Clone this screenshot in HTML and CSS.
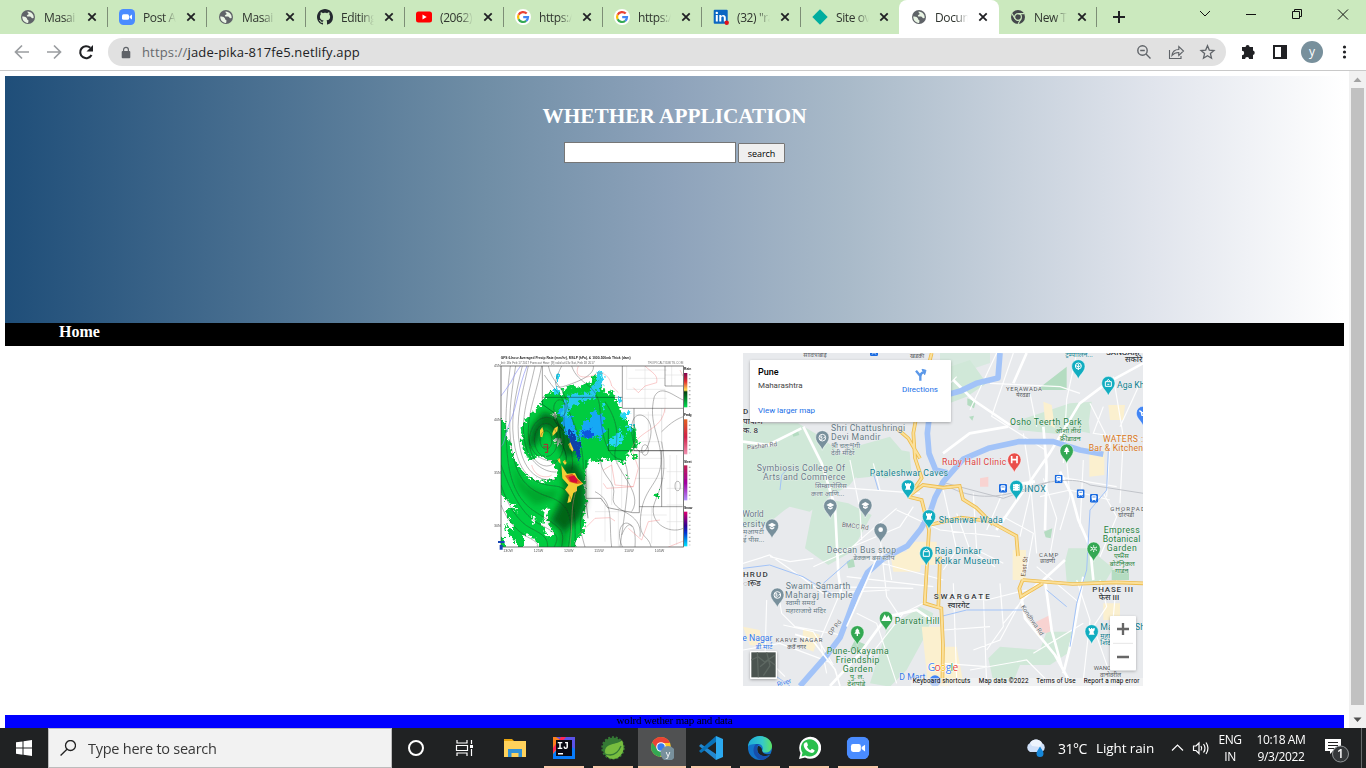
FILE: index.html
```html
<!DOCTYPE html>
<html lang="en">
<head>
<meta charset="utf-8">
<title>Document</title>
<link rel="stylesheet" href="styles.css">
</head>
<body>
<svg class="defs" width="0" height="0" aria-hidden="true">
  <defs>
    <symbol id="globe" viewBox="0 0 16 16"><circle cx="8" cy="8" r="7" fill="#5f6368"/><path d="M2.200 7.600c1.800 0 3.200.2 4.200 1.100 1 .8.2 1.800 1.300 2.100 1.200.3.8 1.500.4 3.100-3.200.3-5.900-2.300-5.900-6.300zM7.500 2.400c-.3 1.600 1.200 1.200 1.100 2.500-.1 1-1.700.6-1.800 1.800 0 .9 2 .8 3 .8 1.500.1 1.400 1.600 2.500 1.800l1.300-.2c.6-3.300-1.900-6.600-6.100-6.700z" fill="#e9f4e4"/></symbol>
    <symbol id="zoomapp" viewBox="0 0 16 16"><rect width="16" height="16" rx="4.500" fill="#4a8cff"/><rect x="3" y="5.200" width="7" height="5.600" rx="1.500" fill="#fff"/><path d="M10.600 7.300 13 5.600v4.800l-2.400-1.700z" fill="#fff"/></symbol>
    <symbol id="google" viewBox="0 0 16 16"><circle cx="8" cy="8" r="8" fill="#fff"/><g fill="none" stroke-width="2.200"><path d="M11.700 4.600A5 5 0 0 0 3.600 5.800" stroke="#ea4335"/><path d="M3.600 5.800a5 5 0 0 0 0 4.400" stroke="#fbbc05"/><path d="M3.600 10.200a5 5 0 0 0 7.600 1.700" stroke="#34a853"/><path d="M11.200 11.900A5 5 0 0 0 13 8.200H8.200" stroke="#4285f4"/></g></symbol>
    <symbol id="close" viewBox="0 0 10 10"><path d="M1.300 1.300 8.700 8.700M8.700 1.300 1.300 8.700" stroke="#202124" stroke-width="1.800"/></symbol>
    <symbol id="pin" viewBox="-22 -22 44 64" overflow="visible"><path d="M0 38C-3 24-20 16-20-1a20 20 0 1 1 40 0C20 16 3 24 0 38z" stroke="#fff" stroke-width="1.500"/></symbol>
    <symbol id="cap" viewBox="-12 -12 24 24"><path d="M-12-2 0-9 12-2 0 5zM-7 3v5l7 4 7-4V3L0 7z" fill="#fff"/></symbol>
    <symbol id="castle" viewBox="-12 -12 24 24"><path d="M-9-10h4v3h3v-3h4v3h3v-3h4v7l-3 3v5l3 5H-9l3-5v-5l-3-3z" fill="#fff"/></symbol>
    <symbol id="tree" viewBox="-12 -12 24 24"><path d="M0-12 7-3H4l5 7H2v7h-4V4h-7l5-7h-3z" fill="#fff"/></symbol>
    <symbol id="train" viewBox="0 0 24 26"><rect width="24" height="26" rx="4" fill="#1a6be0"/><rect x="5" y="4" width="14" height="14" rx="3" fill="#fff"/><path d="M7 7h10v4H7zM6 22l3-4M18 22l-3-4" fill="#1a6be0" stroke="#fff" stroke-width="2"/></symbol>
  </defs>
</svg>

<header class="tabs">
  <div class="tab noline"><svg class="fav"><use href="#globe"/></svg><span class="tab-title">Masai S</span><svg class="x"><use href="#close"/></svg></div>
  <div class="tab"><svg class="fav"><use href="#zoomapp"/></svg><span class="tab-title">Post At</span><svg class="x"><use href="#close"/></svg></div>
  <div class="tab"><svg class="fav"><use href="#globe"/></svg><span class="tab-title">Masai S</span><svg class="x"><use href="#close"/></svg></div>
  <div class="tab"><svg class="fav" viewBox="0 0 16 16"><path fill="#24292f" d="M8 0C3.580 0 0 3.580 0 8c0 3.540 2.290 6.530 5.470 7.590.4.070.55-.17.55-.38 0-.19-.01-.82-.01-1.490-2.010.37-2.530-.49-2.690-.94-.09-.23-.48-.94-.82-1.130-.28-.15-.68-.52-.01-.53.63-.01 1.080.58 1.230.82.72 1.210 1.870.87 2.330.66.070-.52.28-.87.51-1.070-1.780-.2-3.640-.89-3.640-3.950 0-.87.31-1.590.82-2.150-.08-.2-.36-1.020.08-2.120 0 0 .67-.21 2.200.82.64-.18 1.320-.27 2-.27s1.360.09 2 .27c1.530-1.040 2.200-.82 2.200-.82.44 1.100.16 1.920.08 2.120.51.56.82 1.270.82 2.150 0 3.070-1.870 3.750-3.650 3.950.29.25.54.73.54 1.480 0 1.070-.01 1.930-.01 2.200 0 .21.15.46.55.38A8 8 0 0 0 16 8c0-4.420-3.580-8-8-8z"/></svg><span class="tab-title">Editing</span><svg class="x"><use href="#close"/></svg></div>
  <div class="tab"><svg class="fav" viewBox="0 0 16 16"><rect y="2.500" width="16" height="11" rx="2.500" fill="#f00"/><path d="m6.500 5.600 4.200 2.400-4.200 2.400z" fill="#fff"/></svg><span class="tab-title">(2062)</span><svg class="x"><use href="#close"/></svg></div>
  <div class="tab"><svg class="fav"><use href="#google"/></svg><span class="tab-title">https:/</span><svg class="x"><use href="#close"/></svg></div>
  <div class="tab"><svg class="fav"><use href="#google"/></svg><span class="tab-title">https:/</span><svg class="x"><use href="#close"/></svg></div>
  <div class="tab"><svg class="fav" viewBox="0 0 16 16"><rect x=".7" y=".7" width="14" height="14" rx="1" fill="#0a66c2"/><path d="M2.800 6h2v6.500h-2zM6.300 6h1.900v1c1.200-1.800 4.600-1.500 4.600 1.700v3.800h-2V9c0-2-2.500-1.800-2.500 0v3.500h-2z" fill="#fff"/><circle cx="3.800" cy="3.900" r="1.200" fill="#fff"/><circle cx="13.700" cy="13.700" r="2.200" fill="#e0101b"/></svg><span class="tab-title">(32) "ra</span><svg class="x"><use href="#close"/></svg></div>
  <div class="tab"><svg class="fav" viewBox="0 0 16 16"><path d="m8 .3 7.700 7.700L8 15.700.3 8z" fill="#00ad9f"/></svg><span class="tab-title">Site ov</span><svg class="x"><use href="#close"/></svg></div>
  <div class="tab active"><svg class="fav"><use href="#globe"/></svg><span class="tab-title">Docum</span><svg class="x"><use href="#close"/></svg></div>
  <div class="tab noline"><svg class="fav" viewBox="0 0 16 16"><circle cx="8" cy="8" r="7" fill="#44484b"/><circle cx="8" cy="8" r="3.400" fill="none" stroke="#cbe9be" stroke-width="1.200"/><path d="M8 4.600h6M5 9.700 2 4.600M11 9.700 8 15" stroke="#cbe9be" stroke-width="1.100"/></svg><span class="tab-title">New Ta</span><svg class="x"><use href="#close"/></svg></div>
  <div class="newtab"><svg viewBox="0 0 12 12"><path d="M6 0v12M0 6h12" stroke="#202124" stroke-width="2"/></svg></div>
  <svg class="winctl" viewBox="0 0 150 20" fill="none" stroke="#111"><path d="m2 7 5 5 5-5M48 10.500h10M94.500 7.500h7v7h-7zM96.500 7.500v-2h7v7h-2M140 5.500l10 10M150 5.500l-10 10"/></svg>
</header>

<div class="toolbar">
  <svg class="nav-icons" viewBox="0 0 96 36" fill="none" stroke-width="1.700"><path d="M29 18H16M22 11.500 15.500 18l6.500 6.500M47 18h13M54 11.500l6.500 6.500-6.500 6.500" stroke="#9a9da0"/><path d="M91.500 21A6 6 0 1 1 90.300 13.800" stroke="#202124" stroke-width="2.100"/><path d="M93 11v6.500h-6.500z" fill="#202124"/></svg>
  <div class="address">
    <svg class="lock" viewBox="0 0 10 12"><rect x=".7" y="4.500" width="8.600" height="7.200" rx="1" fill="#5f6368"/><path d="M2.600 5V3.200a2.400 2.400 0 0 1 4.800 0V5" fill="none" stroke="#5f6368" stroke-width="1.200"/></svg>
    <span class="url"><i>https://</i>jade-pika-817fe5.netlify.app</span>
    <svg class="addr-icons" viewBox="0 0 80 18" fill="none" stroke="#5f6368" stroke-width="1.400"><circle cx="6.500" cy="7.500" r="4.700"/><path d="M4.200 7.500h4.600M10 11l4.500 4.500"/><path d="M33.500 7v8.500H45V13M36 12.500c.5-4 3-6 6.800-6V3.500L47.500 8l-4.700 4.500v-3c-3-.1-5 .9-6.800 3z" stroke-width="1.100"/><path d="m71.500 2.800 1.800 4.300 4.700.4-3.600 3.100 1.100 4.600-4-2.500-4 2.500 1.100-4.600L65 7.500l4.700-.4z" stroke-width="1.300"/></svg>
  </div>
  <svg class="right-icons" viewBox="0 0 130 36"><path d="M16 13h3.600a2 2 0 0 1 4 0H27v3.600a2.200 2.200 0 0 1 0 4.300V25h-3.900a2 2 0 0 0-4 0H16v-3.800a2.200 2.200 0 0 0 0-4.400z" fill="#202124"/><path d="M48 12h12v12H48z" fill="#fff" stroke="#202124" stroke-width="2"/><path d="M55 12h5v12h-5z" fill="#202124"/><circle cx="86" cy="18" r="11" fill="#78909c"/><text x="86" y="21.500" font-size="12" text-anchor="middle" fill="#fff" font-family="Open Sans">y</text><g fill="#202124"><circle cx="118.500" cy="13" r="1.600"/><circle cx="118.500" cy="18" r="1.600"/><circle cx="118.500" cy="23" r="1.600"/></g></svg>
</div>

<div class="viewport">
  <main class="page">
    <section class="hero">
      <h1>WHETHER APPLICATION</h1>
      <form class="search"><input type="text" aria-label="City"><button type="button">search</button></form>
    </section>
    <nav class="menu"><a>Home</a></nav>
    <section class="maps">
      <svg class="precip" viewBox="24 24 600 600">
        <defs>
          <clipPath id="frame"><rect x="48" y="63" width="547" height="543"/></clipPath>
          <filter id="soft"><feGaussianBlur stdDeviation="1.500"/></filter>
          <filter id="soft2" x="-50%" y="-50%" width="200%" height="200%"><feGaussianBlur stdDeviation="9"/></filter>
          <filter id="ragged" x="-10%" y="-10%" width="120%" height="120%"><feTurbulence type="fractalNoise" baseFrequency=".11" numOctaves="2" seed="4"/><feDisplacementMap in="SourceGraphic" scale="26" xChannelSelector="R" yChannelSelector="G"/></filter>
          <linearGradient id="s1" x2="0" y2="1"><stop stop-color="#800050"/><stop offset=".25" stop-color="#e03030"/><stop offset=".5" stop-color="#ffe050"/><stop offset=".55" stop-color="#064010"/><stop offset="1" stop-color="#00e050"/></linearGradient>
          <linearGradient id="s2" x2="0" y2="1"><stop stop-color="#e06020"/><stop offset=".5" stop-color="#d02048"/><stop offset="1" stop-color="#f090b0"/></linearGradient>
          <linearGradient id="s3" x2="0" y2="1"><stop stop-color="#c02050"/><stop offset=".5" stop-color="#a000a0"/><stop offset="1" stop-color="#b090ff"/></linearGradient>
          <linearGradient id="s4" x2="0" y2="1"><stop stop-color="#e00070"/><stop offset=".4" stop-color="#300090"/><stop offset=".6" stop-color="#0030d0"/><stop offset="1" stop-color="#00e8ff"/></linearGradient>
        </defs>
        <g filter="url(#soft)">
          <rect x="24" y="24" width="600" height="600" fill="#fff"/>
          <g clip-path="url(#frame)">
            <path d="M425 63v70h115v70M480 63v125M450 75h95M430 100h110M415 160h130M540 90h55M560 63v60M450 210h80v80h-80M490 200v110M530 190v120M555 330v270M575 330v270M545 380h50M545 430h50M545 480h50M545 530h50M450 340h80M465 370h80M450 400h90M350 350v120M380 350v130M410 370v120M330 500h110M360 480v110M400 490v115M465 510h80M500 485v110" stroke="#d9d9d9" stroke-width="1.500" fill="none"/>
            <g filter="url(#ragged)">
              <g fill="#05cc40">
                <path d="M40 220 62 232 66 275 78 300 82 330 100 365 130 395 165 410 205 405 213 380 200 352 180 335 150 338 130 345 111 300 108 252 122 222 165 182 180 150 212 134 225 148 240 130 262 120 280 128 300 112 320 118 322 92 345 98 350 126 366 150 382 132 388 160 400 180 408 205 422 215 432 240 456 255 450 278 462 290 452 312 430 320 420 350 388 348 355 342 340 352 312 345 302 380 298 425 305 470 296 515 300 560 275 582 265 616 40 616z"/>
                <path d="M215 165h20v10h-20zM400 340l18 2-3 18-7-3zM435 325l24 5-13 18zM512 445l10-6-3 20-9-2zM425 392h6v6h-6z"/>
              </g>
              <path d="M40 440 62 462 82 478 100 494 96 500 76 484 60 500 72 520 84 545 86 556 70 548 60 530 66 560 92 590 98 616H64L60 584 40 570zM140 512 152 522 148 540 140 528zM176 494 190 488 186 525 198 556 206 572 186 574 172 540zM118 566 140 574 172 616H116zM150 345 175 332 198 350 214 370 215 396 190 402 180 384 162 390 145 375 128 345zM205 285l22-12 4 20-14 12zM198 210l10-10 8 10-8 8z" fill="#fff"/>
            </g>
            <g filter="url(#soft2)" fill="#064d12"><path d="M140 245 175 200 230 220 255 270 275 330 240 340 215 290 180 240 155 300 125 310z" opacity=".75"/><path d="M228 360 270 350 300 400 300 480 285 520 240 560 195 530 220 480 240 440z" opacity=".8"/><path d="M80 360 120 420 180 440 220 430 210 460 150 480 100 430z" opacity=".3"/><path d="M225 540 250 540 240 606 225 606z" opacity=".4"/></g>
            <g filter="url(#ragged)">
              <g fill="#19a8f5"><path d="M220 195 238 180 242 200 262 220 265 246 280 275 290 310 278 325 262 295 240 260 230 220z"/><path d="M232 180 240 165 248 172 252 152 270 145 290 150 300 138 312 148 318 130 330 115 350 98 353 120 340 140 332 138 328 165 310 160 300 172 292 162 280 180 265 178 255 190 250 220 232 210z" fill="#28c8ee"/><path d="M290 245 300 225 315 225 318 205 330 190 344 210 360 215 352 240 362 255 345 285 335 268 325 276 308 285 300 270 282 278z"/><path d="M335 80 346 72 350 92 358 80 355 100 332 108zM200 140l15-18 8 22-12 8zM212 90l8-6 3 24-8 8zM410 205l27-8-15 24-18-5zM370 295l16-22 14-8 6-18 8 36-12 18-25 5zM425 240l20 0-6 16-12 7zM398 155l12 4-4 14-8-4zM348 175l12 8-6 12z" fill="#25d5f4"/><path d="M250 245 270 275 288 305 280 354 270 320 255 300z" fill="#083fa9"/><path d="M290 265 300 252 310 262 320 250 322 280 295 276z" fill="#0854df"/></g>
            </g>
            <g fill="#f4cf36"><path d="M229 360 246 386 270 384 278 400 295 416 276 425 276 438 265 444 258 470 247 474 252 450 240 434 250 420 232 400zM165 256l7-10 4 14-4 17-7-2zM202 265l6-15 11-6-2 15-14 14zM250 298l6-6 10 22-4 6-8-10zM217 342l8-2 2 16-6-5zM233 350l8-6 4 10-5 6z"/><path d="M240 392 262 386 275 400 292 414 276 417 254 411z" fill="#e85a20"/><path d="m250 396 18-5 10 15-3 8-18-4z" fill="#d50f37"/></g>
            <g fill="none" stroke="#222" stroke-width="1.500" opacity=".65">
              <path d="M76 63C64 160 60 230 64 290S72 450 150 500s90 50 80 106M92 63C76 160 68 240 80 310s30 120 110 145 70 90 60 151M112 63c-24 100-38 170-22 245s50 110 120 115 60 120 60 183M130 63c-20 90-40 160-26 240s60 110 110 100M150 63c-22 100-42 150-32 220s60 100 96 98M170 63c-20 100-40 130-40 200s50 90 85 84M178 90c40 60 70 70 60 120s40 120 20 170"/>
              <path d="M48 360c30 80 60 150 120 180s50 40 40 66M48 420c20 60 50 110 90 130s50 30 50 56M48 480c20 50 50 80 80 96s30 20 30 30"/>
              <ellipse cx="183" cy="285" rx="18" ry="28"/><ellipse cx="183" cy="285" rx="35" ry="50"/><ellipse cx="185" cy="290" rx="52" ry="73"/><ellipse cx="225" cy="190" rx="19" ry="26"/>
              <path d="M190 63c10 50 45 60 55 110s50 100 50 200M230 63c-30 60-20 70 10 60s90-30 85-60M260 63c20 60 80 50 85 130s20 140 60 150 20 120 0 262M360 170c40 60 40 100 30 150s90 120 50 180M508 155c-20 80 20 120 20 190s-50 80-60 160 20 60 30 100M508 155c20-40 60 0 87 10M440 250c0 60 30 90 45 60s20-70 0-90-45-10-45 30M470 315a10 16 0 1 0 20 0 10 16 0 1 0-20 0M530 260c30-30 50-40 65-45M530 290c15 80 5 120-20 180s40 100 85 80M310 470c-30 40-30 70-10 136M330 440c60 30 40 90 50 166M345 345c10 60 50 60 40 110s90 40 80 120M410 570c20-50 45-40 40 36M412 606c-25-60 10-90 30-60"/>
              <ellipse cx="578" cy="423" rx="8" ry="14"/>
            </g>
            <g fill="none" stroke="#111" stroke-width="1.600" opacity=".75"><path d="M172 63v115l35 25 15 40 15 15M172 157h240M412 63v127h182M447 190v127h148M370 317h225M303 345v115h45l20 28 75 15h20V317M463 485h130M530 317v168M540 63v60h55M207 210c-3 25 20 30 18 55s30 70 15 86M303 470l6 50M370 250v67M355 345h-15"/></g>
            <g fill="none" stroke="#f28080" stroke-width="1.500" opacity=".8"><path d="M280 63c-20 50 50 30 50 25s40-15 50 35l20 20M480 63c20 20 40 25 35 50l-35 10-20 20-15-15M540 190c-10 70-75 60-100 120l20 60-15 55-55-5-10-60-25 15M445 425l-80 5-10-15M430 550l40 35 20-55 35-5M280 570l50-50 45-2 15 10M275 430c-20 60-10 90-20 176M140 360c10 40 50 40 60 30M550 606l45-18M585 75l10 20"/></g>
            <path d="M107 63c-15 20-20 30-30 50-15 20-20 30-30 40M126 63c-25 60-30 120-48 160s-20 80-30 80" fill="none" stroke="#8e94f5" stroke-width="2"/>
            <path d="M176 298h12v24h-8M174 306h16" stroke="#b42131" stroke-width="3" fill="none"/>
          </g>
          <rect x="48" y="63" width="547" height="543" fill="none" stroke="#333" stroke-width="2"/>
          <g font-family="Liberation Sans"><text x="47" y="41" font-size="13" font-weight="bold" fill="#222" textLength="390" lengthAdjust="spacingAndGlyphs">GFS 6-hour Averaged Precip Rate (mm/hr), MSLP (hPa), &amp; 1000-500mb Thick (dam)</text><text x="47" y="56" font-size="11" fill="#666" textLength="282" lengthAdjust="spacingAndGlyphs">Init: 18z Feb 17 2017  Forecast Hour: [9]  valid at 03z Sat, Feb 18 2017</text><text x="488" y="56" font-size="13" fill="#777" textLength="107" lengthAdjust="spacingAndGlyphs">TROPICALTIDBITS.COM</text><g font-size="11" fill="#555"><text x="27" y="66">45N</text><text x="27" y="227">40N</text><text x="27" y="387">35N</text><text x="27" y="547">30N</text><text x="55" y="621">130W</text><text x="146" y="621">125W</text><text x="237" y="621">120W</text><text x="328" y="621">115W</text><text x="418" y="621">110W</text><text x="509" y="621">105W</text></g><g font-size="10" font-weight="bold" fill="#222"><text x="597" y="76">Rain</text><text x="597" y="214" textLength="23">Frzdg</text><text x="597" y="354" textLength="23">Sleet</text><text x="597" y="493" textLength="25">Snow</text></g></g>
          <rect x="597" y="84" width="10" height="103" fill="url(#s1)"/><rect x="597" y="223" width="10" height="105" fill="url(#s2)"/><rect x="597" y="361" width="10" height="105" fill="url(#s3)"/><rect x="597" y="500" width="10" height="104" fill="url(#s4)"/>
          <path d="M614 88v98M614 227v98M614 365v98M614 503v98" stroke="#999" stroke-width="5" stroke-dasharray="3 9"/>
          <path d="M39 588h20v6H39zM44 600h9v14h-9z" fill="#1745b5"/>
        </g>
      </svg>

      <svg class="city" viewBox="9 9 1200 999">
        <defs><filter id="shadow" x="-10%" y="-10%" width="120%" height="130%"><feDropShadow dx="0" dy="3" stdDeviation="4" flood-opacity=".3"/></filter></defs>
        <rect x="9" y="9" width="1200" height="999" fill="#e8eaed"/>
        <g fill="#d0e8d8">
          <path d="M9 220h165l60 35 70 55 120-20 85 15 5 60-80 20-65-30-40 50-60 35-60 45-60-15-80 55-69-25zM9 350h40l50-40 70-5 50 60-30 70-110 90-70 10zM225 440l100 20 70 35-60 110-70 40-70-50zM310 300l140-40 60 70-10 40-150 15zM440 840l100-70 40 20-20 60-60 110-50 50-60-10zM600 60l90-30 50 70-60 40-80 30zM840 210l150-50 65-5-10 70-60 30-150-15zM985 595l60 0 75 60-30 50-110-10-5-60zM780 890l120 10 20-55 80 0-10 60-60 40-90 0-20 50-60 0-15-70zM1000 240l40-80 10 90z"/>
          <path d="M600 9h150v30l-90 30-60-20z" opacity=".7"/>
        </g>
        <g fill="#b4dcc1"><path d="M890 120 980 50v70zM682 145l25 10-5 20-20-10zM155 245l18-5 5 15-18 5zM320 635l20-10 5 25-20 5zM912 545l25-10-5 30-15-3zM687 200l15-3-5 15zM1115 660h52v30h-52zM345 870l35 15-20 25-30-12z"/></g>
        <g fill="#fbf0cf"><path d="M500 575h90v70h-90zM450 605h100l-10 60h-80zM545 830h60l20 180h-60zM818 600h40v90h-40zM910 155l25 10 10 70-30-20zM1105 165h50l-5 45h-40zM1048 310l45-10 0 75-45 5zM600 890h50l20 110h-70zM1090 760h50v50h-50zM9 830l50 10 10 50-40-5zM190 835l50 20-20 50-35-15z"/></g>
        <path d="M880 820l50-25 0 50-30 10zM720 385l25-5v30h-25z" fill="#f8d3d1"/>
        <g fill="none" stroke="#fff" stroke-width="3.500" opacity=".95">
          <path d="M330 330l30 150 5 90M400 340l20 80M260 410l280 20M220 650l100-45 80-70 70-60M290 610l190-80 40-60M470 480l130 60 180 20M420 560l20 180 40 60M390 630l220 60M440 600l15 90M320 680l260 30M250 710l270 5M9 640l80-25 100 70 60 45 200-10M90 620l60 15 70-10M115 730l10 60 40 40 140 25M80 750l-5 170 60 60M130 825l90 20 60 100M9 900l110-20 160 60M300 730l-60 140 20 100M350 790l60 30 60 180M380 930l110-140 60-30M610 420l40 180-40 60M650 490l40 110 75 50M700 430l10 170 80 40M790 500l90 50-20 110M880 390l-40 170M910 385l40 120-20 110M950 380l180 30M980 330l10 110-30 100M1030 330l-10 200M1090 430l40 70-50 120M740 540l60-140M850 250l20 130 20 230M620 740l120 10 120-30M730 730l10 278M610 840l140-10M640 700l10 290M780 700l10 130-50 70M850 740l-70 130-80 30M890 650l130 110M890 700l-100 120M1010 690l40 120-20 180M1080 690l20 80-40 60 60 170M1130 690l-10 110M1030 820l-150 90M690 960l170-30 70 70M610 940l130 10"/>
          <path d="M1010 9l-30 140-10 190M1050 160l60 120-10 160M1120 80l30 180-10 200M1200 100l-60 130M900 440l90-20 120 30M820 9l-65 190 160 100M770 9l-80 170M750 100l210 10 60 20M650 80l-40 40M1090 170l-30 80 140 20M870 130l20 100"/>
        </g>
        <g fill="none" stroke="#fff" stroke-width="8"><path d="M190 230l15 30 40 80 40 130 10 200 10 70M9 275l75 10 100-50M640 90l60 60 110 75M609 310l80-60 115-20M820 100l40-91M1209 40l-110 60-80 60-90 150-70 100-90 130M910 230l10 120-5 190M815 405l70-10M590 820l-60-40-90 20-80 110-90 98M845 745l10 60 90 110 50 90M855 740l120-110M1030 680l-10 60-20 110-30 120M1060 690l-10-100-35-80-20-75-35-70M915 690l20 150 30 110"/></g>
        <path d="M600 395c90 60 180 50 260 20s160-30 190-10l160 25M600 395l190 50 140-50" stroke="#c1c4ca" stroke-width="3" fill="none"/>
        <g fill="none" stroke="#a2c3f8"><path d="M780 9l-6 75-65 16-45 22-65 18-30 50-7 60 5 60 20 50 35 8M180 1008l75-85 45-60 25-65 22-60 35-70 45-40 75-40 40-50 28-50 15-45 25-48 60-68 75-32 90-20 105 0 80 25 70 13" stroke-width="17" stroke-linejoin="round"/><path d="M120 420l5-45 25-25M400 370l15 50M9 655l80-10 100 35 100 60M600 800l80-20 170 0M1105 300l-5 120-50 60-10 180-30 100-20 130M330 630l-80 70M110 980l40 28M920 720l60 50" stroke-width="3"/></g>
        <path d="M300 1008l-15-50-70-90-50-15M420 600l-60 140-40 90" stroke="#fff" stroke-width="5" fill="none"/>
        <path d="M575 9l-40 160-15 80 5 75 20 60-40 58M470 235l35 30 35 60M504 440l45-35 60 8 50-5 10 40 40 25 50 50M505 440l40 10 10 40 12 50-13 220 50 15 5 110-2 115M567 525l95-22 85 10 82 45 5 60M600 620l-5 150M848 690l150 12 130-5 81 3M848 690l-10 25 5 25 65-40" fill="none" stroke="#edbc4e" stroke-width="11"/>
        <path d="M575 9l-40 160-15 80 5 75 20 60-40 58M470 235l35 30 35 60M504 440l45-35 60 8 50-5 10 40 40 25 50 50M505 440l40 10 10 40 12 50-13 220 50 15 5 110-2 115M567 525l95-22 85 10 82 45 5 60M600 620l-5 150M848 690l150 12 130-5 81 3M848 690l-10 25 5 25 65-40" fill="none" stroke="#fbe09a" stroke-width="6"/>
        <g><use href="#train" x="777" y="402" width="24" height="26"/><use href="#train" x="944" y="374" width="24" height="26"/><use href="#train" x="1010" y="418" width="24" height="26"/><use href="#train" x="1050" y="432" width="24" height="26"/><use href="#train" x="390" y="-8" width="24" height="26"/></g>
        <g fill="#78909c"><use href="#pin" x="225" y="241" width="44" height="64"/><use href="#pin" x="249" y="446" width="44" height="64"/><use href="#pin" x="354" y="444" width="44" height="64"/><use href="#pin" x="74" y="506" width="44" height="64"/><use href="#pin" x="400" y="518" width="44" height="64"/><use href="#pin" x="90" y="713" width="44" height="64"/></g>
        <g fill="#12adc0"><use href="#pin" x="482" y="388" width="44" height="64"/><use href="#pin" x="545" y="478" width="44" height="64"/><use href="#pin" x="537" y="588" width="44" height="64"/><use href="#pin" x="993" y="28" width="44" height="64"/><use href="#pin" x="1083" y="78" width="44" height="64"/><use href="#pin" x="807" y="390" width="44" height="64"/><use href="#pin" x="1033" y="823" width="44" height="64"/></g>
        <g fill="#34a853"><use href="#pin" x="958" y="281" width="44" height="64"/><use href="#pin" x="416" y="783" width="44" height="64"/><use href="#pin" x="330" y="826" width="44" height="64"/><use href="#pin" x="1039" y="575" width="44" height="64"/></g>
        <use href="#pin" x="801" y="308" width="44" height="64" fill="#ea4f4b"/><use href="#pin" x="1187" y="168" width="44" height="64" fill="#4285f4"/>
        <path d="M1198 182l6 4 2 10h10M1204 188h8" stroke="#fff" stroke-width="4" fill="none"/>
        <use href="#cap" x="259" y="455" width="24" height="24"/><use href="#cap" x="364" y="453" width="24" height="24"/><use href="#cap" x="84" y="515" width="24" height="24"/><circle cx="422" cy="539" r="7" fill="#fff"/>
        <use href="#castle" x="492" y="397" width="24" height="24"/><use href="#castle" x="555" y="487" width="24" height="24"/><use href="#castle" x="1043" y="832" width="24" height="24"/><use href="#tree" x="968" y="290" width="24" height="24"/><use href="#tree" x="340" y="835" width="24" height="24"/>
        <path d="M424 813l10-20 6 10 5-7 9 17zM819 402h20v20h-20z" fill="#fff"/><path d="M822 402v20M836 402v20" stroke="#12adc0" stroke-width="2" stroke-dasharray="3 3"/>
        <path d="M815 318v22M831 318v22M815 329h16" stroke="#fff" stroke-width="5"/><g fill="none" stroke="#fff" stroke-width="3"><path d="M550 605h18v14h-18zM549 604l10-7 10 7M1096 95h18v14h-18zM1099 95l6-7 6 7M1102 103h6"/><circle cx="1015" cy="48" r="9"/><path d="M1015 42v18M1008 47l7 4 7-4"/><circle cx="247" cy="263" r="10"/><circle cx="112" cy="735" r="10"/><path d="M241 259c7-3 7 5 1 4 8 1 6 9-1 5M106 731c7-3 7 5 1 4 8 1 6 9-1 5M250 264l5-3M115 736l5-3"/><circle cx="1061" cy="596" r="4"/><path d="M1061 586v4M1061 602v4M1051 591l5 2M1066 599l5 2M1051 601l5-2M1066 593l5-2"/></g>
        <g class="lbl grey"><text x="273" y="244" textLength="222">Shri Chattushringi</text><text x="273" y="271" textLength="148">Devi Mandir</text><text x="50" y="363" textLength="265">Symbiosis College Of</text><text x="69" y="391" textLength="247">Arts and Commerce</text><text x="7" y="502" textLength="64">World</text><text x="7" y="530" textLength="68">ersity</text><text x="260" y="608" textLength="208">Deccan Bus stop</text><text x="137" y="716" textLength="194">Swami Samarth</text><text x="135" y="743" textLength="203">Maharaj Temple</text></g>
        <g class="lbl grey deva"><text x="273" y="294">श्री चतुःशृंगी</text><text x="273" y="316">देवी मंदिर</text><text x="225" y="415">सिम्बायोसिस</text><text x="213" y="437">कला आणि...</text><text x="9" y="553">मआयटी</text><text x="9" y="576">ई पीस...</text><text x="340" y="629">डेक्कन बस स्टॉप</text><text x="137" y="766">स्वामी समर्थ</text><text x="137" y="789">महाराजाचे मंदिर</text></g>
        <g class="lbl teal"><text x="389" y="379" textLength="235">Pataleshwar Caves</text><text x="853" y="427" textLength="64">INOX</text><text x="596" y="518" textLength="192">Shaniwar Wada</text><text x="584" y="613" textLength="140">Raja Dinkar</text><text x="584" y="641" textLength="194">Kelkar Museum</text><text x="1131" y="114">Aga Khan</text><text x="1081" y="841" textLength="134">Mahadji Sh</text></g>
        <g class="lbl teal deva"><text x="976" y="22">ट्रम्पोलिन...</text><text x="1081" y="863">महादजी</text><text x="1081" y="884">शिंदे</text></g>
        <g class="lbl green"><text x="810" y="225" textLength="215">Osho Teerth Park</text><text x="464" y="821" textLength="134">Parvati Hill</text><text x="260" y="911" textLength="186">Pune-Okayama</text><text x="287" y="939" textLength="131">Friendship</text><text x="308" y="967" textLength="90">Garden</text><text x="1091" y="548" textLength="108">Empress</text><text x="1088" y="575" textLength="113">Botanical</text><text x="1100" y="603" textLength="90">Garden</text></g>
        <g class="lbl green deva"><text x="946" y="249">ओशो तीर्थ</text><text x="960" y="272">क्रीडावन</text><text x="330" y="988">पु. ल.</text><text x="322" y="1009">देशपांडे</text><text x="1122" y="625">एम्प्रेस</text><text x="1109" y="648">बोटॅनिकल</text><text x="1125" y="670">गार्डन</text></g>
        <text class="lbl red" x="606" y="346" textLength="193">Ruby Hall Clinic</text><g class="lbl orange"><text x="1089" y="276" textLength="120">WATERS :</text><text x="1046" y="304" textLength="163">Bar &amp; Kitchen</text></g>
        <g class="lbl place"><text x="798" y="124" textLength="108">YERAWADA</text><text x="828" y="141">येरवडा</text><text x="1111" y="484" textLength="112">GHORPADI</text><text x="1135" y="501">घोरपडी</text><text x="897" y="622" textLength="58">CAMP</text><text x="900" y="640">छावणी</text><text x="107" y="877" textLength="140">KARVE NAGAR</text><text x="142" y="897">कर्वे नगर</text><text x="1061" y="961">WANOWRIE</text><text x="1080" y="980">वानोवरील</text><text x="510" y="24">खडकी</text><text x="190" y="20">सावित्रीबाई</text></g>
        <g class="lbl big"><text x="581" y="747" textLength="168">SWARGATE</text><text x="623" y="773">स्वारगेट</text><text x="1057" y="725" textLength="122">PHASE III</text><text x="1076" y="749">फेस III</text><text x="9" y="682" textLength="74">HRUD</text><text x="9" y="708">ारूड</text><text x="9" y="193">D</text><text x="9" y="222">पाषाण</text><text x="9" y="248">क. 8</text><text x="1098" y="14">SANGAM</text><text x="1155" y="36">सकोरे</text></g>
        <g class="lbl small"><text transform="translate(22 299) rotate(-7)">Pashan Rd</text><text transform="translate(305 530) rotate(7)">BMCC Rd</text><text transform="translate(274 857) rotate(-53)">DP Rd</text><text transform="translate(856 680) rotate(-83)" class="brown">East St</text><text transform="translate(842 770) rotate(56)">Kondhwa Rd</text></g>
        <g class="lbl blue"><text x="7" y="874">e Nagar</text><text x="47" y="897" class="deva">डी मार्ट</text><text x="478" y="991">D Mart</text><text transform="translate(113 1010) rotate(-16)" class="river">River</text><circle cx="585" cy="993" r="17" fill="#4285f4"/></g>
        <text x="563" y="963" class="glogo" textLength="92"><tspan fill="#4285f4">G</tspan><tspan fill="#ea4335">o</tspan><tspan fill="#fbbc05">o</tspan><tspan fill="#4285f4">g</tspan><tspan fill="#34a853">l</tspan><tspan fill="#ea4335">e</tspan></text>
        <g filter="url(#shadow)"><rect x="30" y="30" width="603" height="186" rx="3" fill="#fff"/><rect x="1110" y="798" width="78" height="163" rx="3" fill="#fff"/><rect x="30" y="903" width="81" height="84" rx="3" fill="#fff"/></g>
        <rect x="34" y="907" width="73" height="75" fill="#4b5450"/><path d="M34 930l20-10 20 16 30-20M52 907l3 75M60 950l25-20 20 15M80 907l10 40-20 30" stroke="#5e6862" stroke-width="4" fill="none"/>
        <path d="M1131 837h36M1149 819v36M1131 921h36" stroke="#666" stroke-width="7"/><path d="M1119 880h60" stroke="#e6e6e6" stroke-width="3"/>
        <g class="card"><text x="54" y="75" font-size="27" font-weight="500" fill="#000" textLength="62">Pune</text><text x="54" y="115" font-size="24" fill="#444" textLength="134">Maharashtra</text><text x="54" y="188" font-size="24" fill="#1a6fe8" textLength="171">View larger map</text><text x="486" y="125" font-size="24" fill="#1a6fe8" textLength="108">Directions</text></g>
        <path d="M541 92V78L528 62M541 80c0-7 4-12 10-13" stroke="#5b98e8" stroke-width="7" fill="none"/><path d="m546 58 12 3-4 13z" fill="#5b98e8" stroke="#5b98e8" stroke-width="3"/>
        <rect x="512" y="984" width="697" height="24" fill="#f5f5f5" opacity=".65"/><g class="credits"><text x="518" y="999" textLength="173">Keyboard shortcuts</text><text x="716" y="999" textLength="150">Map data ©2022</text><text x="889" y="999" textLength="118">Terms of Use</text><text x="1031" y="999" textLength="167">Report a map error</text></g>
      </svg>
    </section>
    <footer class="footer">wolrd wether map and data</footer>
  </main>
  <div class="scrollbar"><svg viewBox="0 0 17 17"><path d="m8.500 6.500 4 4.500h-8z" fill="#a3a3a3"/></svg><div class="thumb"></div><svg viewBox="0 0 17 17"><path d="m4.500 6.500 4 4.500 4-4.500z" fill="#505050"/></svg></div>
</div>

<div class="taskbar">
  <div class="start"><svg viewBox="0 0 16 16"><path d="M0 2.300 6.500 1.400v6.200H0zM7.500 1.200 16 0v7.600H7.500zM0 8.600h6.500v6.200L0 13.800zM7.500 8.600H16V16l-8.500-1.200z" fill="#fff"/></svg></div>
  <div class="tasksearch"><svg viewBox="0 0 16 16" fill="none" stroke="#222" stroke-width="1.300"><circle cx="10.500" cy="5.500" r="5"/><path d="M7 9.200.6 15.500"/></svg><span>Type here to search</span></div>
  <div class="cell"><svg viewBox="0 0 24 24"><circle cx="11" cy="12" r="7" fill="none" stroke="#fff" stroke-width="2"/></svg></div>
  <div class="cell"><svg viewBox="0 0 24 24" fill="none" stroke="#fff" stroke-width="1.200"><path d="M3 4v3h10V4M2.500 9.500h11v5h-11zM3 20v-3h10v3M17.500 4v4M17.500 13v7"/><path d="M16 9h3v3h-3z" fill="#fff" stroke="none"/></svg></div>
  <div class="cell"><svg viewBox="0 0 24 24"><path d="M1 3h8l2 2H1z" fill="#e8a40c"/><path d="M1 5h22v16H1z" fill="#ffd25b"/><path d="M5 21v-8h14v8h-3.500v-4h-7v4z" fill="#3292d6"/></svg></div>
  <div class="cell open"><svg viewBox="0 0 24 24"><path d="M1 1h22v22H1z" fill="#087cfa"/><path d="M1 1h14L1 18z" fill="#fc801d"/><path d="M4 1h19v12z" fill="#5b52e8"/><path d="M9 1h5L1 17v-5z" fill="#fe2857"/><path d="M4 4h16v16H4z" fill="#090912"/><text x="5" y="13" font-size="10" font-weight="bold" fill="#fff" font-family="Liberation Mono">IJ</text><path d="M6 17h5v1.500H6z" fill="#fff"/></svg></div>
  <div class="cell open"><svg viewBox="0 0 24 24"><circle cx="12" cy="12" r="10.500" fill="#357a35" stroke="#357a35" stroke-width="2.500" stroke-dasharray="2 1.700"/><path d="M21 4c-3 5-16 2-17 11 0 8 9 10 14 6 6-5 5-11 3-17z" fill="#77bd3f"/><path d="M4 18c8 3 13-1 16-8" fill="none" stroke="#357a35" stroke-width="1.300"/></svg></div>
  <div class="cell open current"><svg viewBox="0 0 24 24"><circle cx="11" cy="11" r="10" fill="#fbc52c"/><path d="M11 1a10 10 0 0 0-8.800 5.500l4.600 7.500L11 7h9A10 10 0 0 0 11 1z" fill="#ea4335"/><path d="M2.200 6.500A10 10 0 0 0 10 21l4-8H7z" fill="#34a853"/><circle cx="11" cy="11" r="4.800" fill="#fff"/><circle cx="11" cy="11" r="3.700" fill="#367bf0"/><circle cx="18" cy="17.500" r="7.500" fill="#78909c"/><text x="18" y="20.500" text-anchor="middle" font-size="9" fill="#fff" font-family="Open Sans">y</text></svg></div>
  <div class="cell open"><svg viewBox="0 0 24 24"><path d="M17 0v24L0 10l2-2 15 10z" fill="#2388cf"/><path d="M17 0 0 15l2 2L17 6z" fill="#0872b9"/><path d="m17 0 7 3v18l-7 3z" fill="#2ba9ef"/></svg></div>
  <div class="cell open"><svg viewBox="0 0 24 24"><defs><linearGradient id="edge"><stop stop-color="#1dacda"/><stop offset=".6" stop-color="#36c9c8"/><stop offset="1" stop-color="#5de460"/></linearGradient></defs><circle cx="12" cy="12" r="12" fill="#1272c9"/><path d="M0 11C0 4 6 0 12 0c7 0 12 5 12 10 0 7-8 8-10 5 2-3 0-7-4-7-5 0-9 0-10 3z" fill="url(#edge)"/><path d="M10 10c-2 5 1 10 6 10 3 0 5-.6 7-2-4 1-9 0-9-4 0-2-2-4-4-4z" fill="#202223"/><path d="M8 8c-5 5-2 14 5 16 3 0 7-2 9-5-5 3-12 0-13-5-.2-2 0-4 2-6z" fill="#164eac"/></svg></div>
  <div class="cell open"><svg viewBox="0 0 24 24"><path d="m2 23 1.500-6A11 11 0 1 1 8 21.500z" fill="#fff"/><path d="m4.500 20.500 1-3.700A8.700 8.700 0 1 1 8.500 19.500z" fill="#2abf4d"/><path d="M8.500 6.500 10 6.300l1 3-1 1.500c1 2 2 2.800 3.500 3.400l1.400-1.500 2.700 1.500c-.2 2-1.800 3-3.600 2.600-4-1-7.500-4.500-7.300-8 .1-1 .8-2 1.800-2.300z" fill="#fff"/></svg></div>
  <div class="cell open"><svg viewBox="0 0 16 16"><use href="#zoomapp" x=".5" y=".5" width="15" height="15"/></svg></div>
  <div class="tray">
    <svg class="cloud" viewBox="0 0 24 22"><path d="M6 15a5 5 0 0 1 0-9A7 7 0 0 1 18 6a5 5 0 0 1 0 9z" fill="#cfe0f8"/><path d="M6 6a7 7 0 0 1 12 0l-2 4-8-1z" fill="#edf4fd"/><path d="M16 9.500c-2 3.500-3.500 5-3.500 7a3.500 3.500 0 0 0 7 0c0-2-1.500-3.500-3.500-7z" fill="#1687d9"/></svg>
    <span class="temp">31°C</span><span class="cond">Light rain</span>
    <svg class="status" viewBox="0 0 42 20" fill="none" stroke="#fff" stroke-width="1.200"><path d="m1 12.500 5.500-5.500 5.500 5.500M22.500 8v4.500H25l3 3V5L25 8zM30 8q1.500 2.200 0 4.500M32.500 6q3 4.200 0 8.500M35 4.500q4 5.700 0 11.500"/></svg>
    <div class="stack lang"><span>ENG</span><span>IN</span></div>
    <div class="stack clock"><span>10:18 AM</span><span>9/3/2022</span></div>
    <svg class="note" viewBox="0 0 28 28"><path d="M2 3h16v12H10l-3 3v-3H2z" fill="#fff"/><path d="M5 6.500h10M5 9.500h10M5 12.500h6" stroke="#222"/><circle cx="17.500" cy="18" r="8" fill="#35383a" stroke="#929698"/><text x="17.500" y="22" text-anchor="middle" font-size="12" font-weight="600" fill="#fff" font-family="Open Sans">1</text></svg>
    <i class="peek"></i>
  </div>
</div>
</body>
</html>
```

FILE: styles.css
```css
* { box-sizing: border-box; }
body { margin: 0; width: 1366px; height: 768px; overflow: hidden; display: flex; flex-direction: column; background: #fff; font-family: "Open Sans", "Noto Sans", sans-serif; }
svg { display: block; flex: none; }
.defs { position: absolute; }

.tabs { height: 34px; flex: none; display: flex; background: #cbe9be; padding-left: 8px; }
.tab { width: 99px; height: 34px; flex: none; display: flex; align-items: center; padding-left: 12px; background: linear-gradient(#7d8e76, #7d8e76) 0 7px / 1px 20px no-repeat; }
.tab.noline { background: none; }
.tab.active { width: 100px; margin-right: -1px; background: #fff; border-radius: 8px 8px 0 0; }
.fav { width: 16px; height: 16px; }
.tab-title { width: 34px; margin-left: 8px; overflow: hidden; white-space: nowrap; font-size: 12px; letter-spacing: -.4px; color: #30352f; -webkit-mask-image: linear-gradient(90deg, #000 60%, transparent 97%); mask-image: linear-gradient(90deg, #000 60%, transparent 97%); }
.x { width: 10px; height: 10px; margin-left: 9px; }
.newtab { margin-left: -1px; padding: 11px 0 0 17px; background: linear-gradient(#7d8e76, #7d8e76) 0 7px / 1px 20px no-repeat; }
.newtab svg { width: 12px; height: 12px; }
.winctl { width: 150px; height: 20px; margin: 4px 0 0 73px; overflow: visible; }

.toolbar { height: 37px; flex: none; display: flex; border-bottom: 1px solid #c9c9c9; background: #fff; }
.nav-icons { width: 96px; height: 36px; }
.address { width: 1118px; height: 28px; margin: 4px 0 0 12px; background: #e1e1e1; border-radius: 14px; display: flex; align-items: center; padding-left: 13px; }
.lock { width: 10px; height: 13px; }
.url { margin-left: 11px; font-size: 13px; letter-spacing: .15px; color: #202124; flex: 1; }
.url i { font-style: normal; color: #676a6d; }
.addr-icons { width: 80px; height: 18px; margin-right: 10px; }
.right-icons { width: 130px; height: 36px; }

.viewport { height: 657px; flex: none; display: flex; overflow: hidden; }
.page { width: 1349px; padding: 5px 5px 0; display: flex; flex-direction: column; font-family: "Liberation Serif", serif; }
.hero { height: 247px; flex: none; display: flex; flex-direction: column; align-items: center; padding-top: 28px; background: linear-gradient(90deg, #1f4e79, #708ea6 36%, #8ea3bb 50%, #a9bac9 63%, #e0e4ec 85.5%, #fff); }
.hero h1 { margin: 0; font-size: 21.300px; line-height: 24px; color: #fff; white-space: nowrap; }
.search { display: flex; align-items: flex-end; gap: 2px; margin-top: 14px; }
.search input { width: 172px; height: 21px; border: 1px solid #767676; padding: 0; background: #fff; }
.search button { width: 47px; height: 20px; border: 1px solid #767676; border-radius: 1px; background: #efefef; color: #000; padding: 0; font: 9px "Open Sans", sans-serif; letter-spacing: -.1px; }
.menu { height: 23px; flex: none; background: #000; padding-left: 54px; color: #fff; font-weight: bold; font-size: 16px; line-height: 18px; }
.maps { height: 369px; flex: none; display: flex; align-items: flex-start; gap: 50px; padding: 7px 0 0 488px; }
.precip { width: 200px; height: 200px; }
.city { width: 400px; height: 333px; }
.footer { height: 24px; flex: none; background: #00f; color: #000; text-align: center; font-size: 11px; letter-spacing: -.15px; line-height: 11px; }

.scrollbar { width: 17px; background: #f1f1f1; display: flex; flex-direction: column; align-items: center; }
.scrollbar svg { width: 17px; height: 17px; }
.thumb { width: 13px; height: 617px; background: #c1c1c1; margin-bottom: 6px; }

.lbl { font: 26px Roboto, "Noto Sans", sans-serif; paint-order: stroke; stroke: #f4f5f6; stroke-width: 2px; stroke-linejoin: round; }
.deva { font-size: 21px; }
.grey { fill: #647984; }
.teal { fill: #0e7e8e; }
.green { fill: #1d7f40; }
.red { fill: #dc4340; }
.orange { fill: #d7761b; }
.place { fill: #50555a; font-size: 18px; }
.big { fill: #353a3e; font-size: 24px; font-weight: 500; }
.small { fill: #666b70; font-size: 19px; }
.brown { fill: #76552e; }
.blue { fill: #3477e8; }
.river { font-size: 20px; }
.glogo { font: 500 31px "Open Sans", sans-serif; stroke: #fff; stroke-width: 3px; paint-order: stroke; }
.card { font-family: Roboto, sans-serif; }
.credits { font: 19px Roboto, sans-serif; fill: #000; }

.taskbar { height: 40px; flex: none; display: flex; background: #202223; }
.start { width: 48px; padding: 12px 0 0 16px; }
.start svg { width: 16px; height: 16px; }
.tasksearch { width: 344px; height: 40px; border: 1px solid #bcbcbc; background: #f2f2f2; display: flex; align-items: center; padding-left: 11px; font-size: 14.500px; letter-spacing: -.25px; color: #383838; }
.tasksearch svg { width: 16px; height: 16px; margin-right: 12px; }
.cell { width: 49px; display: flex; justify-content: center; align-items: center; }
.cell svg { width: 24px; height: 24px; }
.open { background: linear-gradient(#f9c9aa, #f9c9aa) center bottom / 40px 2px no-repeat; }
.current { background: linear-gradient(#f9c9aa, #f9c9aa) center bottom / 48px 2px no-repeat, linear-gradient(#505152, #505152) center / 48px 40px no-repeat; }
.tray { flex: 1; display: flex; align-items: center; color: #fff; padding-left: 142px; font-size: 14px; }
.cloud { width: 24px; height: 22px; }
.temp { width: 38px; margin-left: 10px; letter-spacing: -.5px; }
.cond { width: 58px; white-space: nowrap; font-size: 13.500px; letter-spacing: -.1px; }
.status { width: 42px; height: 20px; margin-left: 17px; }
.stack { display: flex; flex-direction: column; align-items: center; font-size: 12px; line-height: 17px; letter-spacing: -.4px; white-space: nowrap; }
.lang { width: 26px; margin-left: 4px; }
.clock { width: 54px; margin-left: 11px; }
.note { width: 28px; height: 28px; margin: 4px 0 0 15px; }
.peek { width: 1px; height: 40px; background: #66696b; margin-left: 10px; }
```
